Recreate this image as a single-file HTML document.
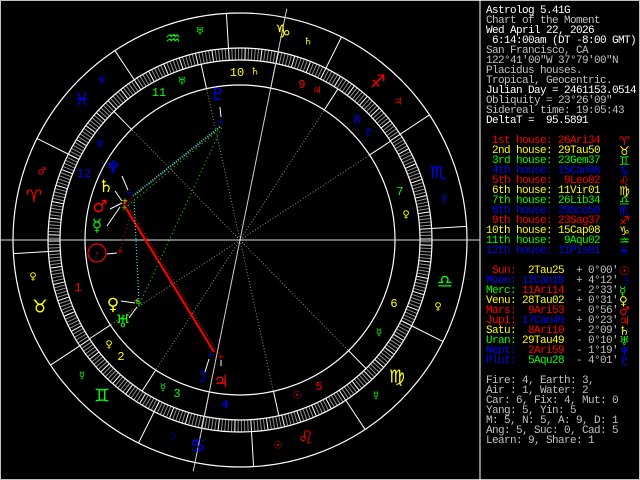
<!DOCTYPE html>
<html><head><meta charset="utf-8">
<style>
html,body{margin:0;padding:0;background:#000;}
#wrap{position:relative;width:640px;height:480px;overflow:hidden;background:#000;}
#frame{position:absolute;left:0;top:0;width:638px;height:478px;border:1px solid #c0c0c0;}
svg{position:absolute;left:0;top:0;}
.t{position:absolute;left:486px;font-family:"Liberation Mono","DejaVu Sans Mono",monospace;font-size:11px;letter-spacing:-0.6px;line-height:10px;white-space:pre;color:#c0c0c0;}
.g{position:absolute;left:619px;font-family:"DejaVu Sans",sans-serif;font-size:12px;line-height:10px;}
.w{color:#fff}.r{color:#f00}.y{color:#ff0}.gr{color:#0f0}.b{color:#00f}.s{color:#c0c0c0}
</style></head><body>
<div id="wrap">
<div id="frame"></div>
<svg id="c" width="640" height="480" viewBox="0 0 640 480" font-family="DejaVu Sans, sans-serif">
<line x1="480" y1="0" x2="480" y2="480" stroke="#fff" stroke-width="1"/>
<g id="gen"></g>
<g fill="none">
<line x1="133" y1="196" x2="221" y2="126" stroke="#0ff" stroke-width="2" stroke-dasharray="1 1.5"/>
<line x1="124" y1="204" x2="221" y2="127" stroke="#f00" stroke-width="1" stroke-dasharray="1 2"/>
<line x1="125" y1="208" x2="220" y2="129" stroke="#0f0" stroke-width="1" stroke-dasharray="1 3"/>
<line x1="124" y1="205" x2="214" y2="352" stroke="#f00" stroke-width="2"/>
<line x1="127" y1="205" x2="220" y2="356" stroke="#f00" stroke-width="1" stroke-dasharray="1 2"/>
<line x1="120" y1="252" x2="131" y2="210" stroke="#f00" stroke-width="1" stroke-dasharray="1 3"/>
<line x1="139" y1="302" x2="134" y2="200" stroke="#0ff" stroke-width="1.2" stroke-dasharray="1 2"/>
<line x1="140" y1="303" x2="222" y2="127" stroke="#0f0" stroke-width="1" stroke-dasharray="1 3"/>
</g>
<g stroke="#fff" stroke-width="1">
<line x1="220" y1="107" x2="221" y2="117"/>
<line x1="122" y1="176" x2="128" y2="190"/>
<line x1="115" y1="191" x2="122" y2="201"/>
<line x1="110" y1="209" x2="122" y2="203"/>
<line x1="107" y1="226" x2="120" y2="207"/>
<line x1="107" y1="254" x2="117" y2="253"/>
<line x1="121" y1="301" x2="135" y2="303"/>
<line x1="129" y1="318" x2="137" y2="307"/>
<line x1="205" y1="372" x2="209" y2="359"/>
<line x1="221" y1="366" x2="221" y2="360"/>
</g>
<g font-size="8" text-anchor="middle" dominant-baseline="central">
<text x="221" y="122" fill="#00f">+</text>
<text x="129" y="193" fill="#00f">+</text>
<text x="125" y="201" fill="#ff0">+</text>
<text x="124" y="204" fill="#f00">+</text>
<text x="124" y="208" fill="#0f0">+</text>
<text x="120" y="251" fill="#f00">+</text>
<text x="137" y="301" fill="#ff0">+</text>
<text x="139" y="304" fill="#0f0">+</text>
<text x="210" y="355" fill="#00f">+</text>
<text x="221" y="357" fill="#f00">+</text>
</g>
<g font-family="Liberation Mono, monospace" font-size="12" text-anchor="middle" dominant-baseline="central">
<text x="78" y="288" fill="#f00">1</text>
<text x="121" y="357" fill="#ff0">2</text>
<text x="177" y="394" fill="#0f0">3</text>
<text x="225" y="405" fill="#00f">4</text>
<text x="319" y="387" fill="#f00">5</text>
<text x="394" y="304" fill="#ff0">6</text>
<text x="400" y="192" fill="#0f0">7</text>
<text x="357" y="120" fill="#00f">8</text>
<text x="302" y="85" fill="#f00">9</text>
<text x="237" y="73" fill="#ff0">10</text>
<text x="159" y="93" fill="#0f0">11</text>
<text x="84" y="174" fill="#00f">12</text>
</g>
<g font-size="18" text-anchor="middle" dominant-baseline="central">
<text x="34" y="197" fill="#f00">♈</text>
<text x="40" y="307" fill="#ff0">♉</text>
<text x="102" y="396" fill="#0f0">♊</text>
<text x="198" y="446" fill="#00f">♋</text>
<text x="306" y="438" fill="#f00">♌</text>
<text x="397" y="377" fill="#ff0">♍</text>
<text x="445" y="282" fill="#0f0">♎</text>
<text x="438" y="173" fill="#00f">♏</text>
<text x="378" y="82" fill="#f00">♐</text>
<text x="283" y="32" fill="#ff0">♑</text>
<text x="173" y="39" fill="#0f0">♒</text>
<text x="82" y="100" fill="#00f">♓</text>
</g>
<g font-size="10" text-anchor="middle" dominant-baseline="central">
<text x="200" y="32" fill="#0f0">♅</text>
<text x="102" y="81" fill="#00f">♆</text>
<text x="42" y="172" fill="#f00">♂</text>
<text x="33" y="277" fill="#ff0">♀</text>
<text x="82" y="376" fill="#0f0">☿</text>
<text x="171" y="437" fill="#00f">☽</text>
<text x="278" y="446" fill="#f00">☉</text>
<text x="376" y="396" fill="#0f0">☿</text>
<text x="438" y="307" fill="#ff0">♀</text>
<text x="445" y="200" fill="#00f">♇</text>
<text x="398" y="102" fill="#f00">♃</text>
<text x="308" y="42" fill="#ff0">♄</text>
<text x="255" y="72" fill="#ff0">♄</text>
<text x="182" y="82" fill="#0f0">♅</text>
<text x="100" y="145" fill="#00f">♆</text>
<text x="109" y="345" fill="#ff0">♀</text>
<text x="163" y="388" fill="#0f0">☿</text>
<text x="224" y="406" fill="#00f">☽</text>
<text x="297" y="396" fill="#f00">☉</text>
<text x="379" y="333" fill="#0f0">☿</text>
<text x="406" y="215" fill="#ff0">♀</text>
<text x="369" y="133" fill="#00f">♇</text>
<text x="317" y="91" fill="#f00">♃</text>
</g>
<circle cx="97" cy="253" r="9" fill="none" stroke="#f00" stroke-width="1.2"/>
<circle cx="97" cy="253" r="0.8" fill="#f00"/>
<g font-size="17" text-anchor="middle" dominant-baseline="central">
<text x="218" y="95" fill="#00f">♇</text>
<text x="113" y="168" fill="#00f">♆</text>
<text x="106" y="187" fill="#ff0">♄</text>
<text x="100" y="207" fill="#f00">♂</text>
<text x="97" y="226" fill="#0f0">☿</text>
<text x="113" y="305" fill="#ff0">♀</text>
<text x="123" y="322" fill="#0f0">♅</text>
<text x="200" y="377" fill="#00f">☽</text>
<text x="221" y="382" fill="#f00">♃</text>
</g>
</svg>

<div class="t w" style="top:6px">Astrolog 5.41G</div>
<div class="t s" style="top:16px">Chart of the Moment</div>
<div class="t w" style="top:26px">Wed April 22, 2026</div>
<div class="t w" style="top:36px"> 6:14:00am (DT -8:00 GMT)</div>
<div class="t s" style="top:46px">San Francisco, CA</div>
<div class="t s" style="top:56px">122°41'00"W 37°79'00"N</div>
<div class="t s" style="top:66px">Placidus houses.</div>
<div class="t s" style="top:76px">Tropical, Geocentric.</div>
<div class="t w" style="top:86px">Julian Day = 2461153.0514</div>
<div class="t s" style="top:96px">Obliquity = 23°26'09"</div>
<div class="t s" style="top:106px">Sidereal time: 19:05:43</div>
<div class="t w" style="top:116px">DeltaT =  95.5891</div>

<div class="t r" style="top:136px"> 1st house: 26Ari34</div><div class="g r" style="top:136px">♈</div>
<div class="t y" style="top:146px"> 2nd house: 29Tau50</div><div class="g y" style="top:146px">♉</div>
<div class="t gr" style="top:156px"> 3rd house: 23Gem37</div><div class="g gr" style="top:156px">♊</div>
<div class="t b" style="top:166px"> 4th house: 15Can08</div><div class="g b" style="top:166px">♋</div>
<div class="t r" style="top:176px"> 5th house:  9Leo02</div><div class="g r" style="top:176px">♌</div>
<div class="t y" style="top:186px"> 6th house: 11Vir01</div><div class="g y" style="top:186px">♍</div>
<div class="t gr" style="top:196px"> 7th house: 26Lib34</div><div class="g gr" style="top:196px">♎</div>
<div class="t b" style="top:206px"> 8th house: 29Sco50</div><div class="g b" style="top:206px">♏</div>
<div class="t r" style="top:216px"> 9th house: 23Sag37</div><div class="g r" style="top:216px">♐</div>
<div class="t y" style="top:226px">10th house: 15Cap08</div><div class="g y" style="top:226px">♑</div>
<div class="t gr" style="top:236px">11th house:  9Aqu02</div><div class="g gr" style="top:236px">♒</div>
<div class="t b" style="top:246px">12th house: 11Pis01</div><div class="g b" style="top:246px">♓</div>

<div class="t" style="top:266px"><span class="r"> Sun:</span>  <span class="y">2Tau25</span>  + 0°00'</div><div class="g r" style="top:266px">☉</div>
<div class="t" style="top:276px"><span class="b">Moon:</span> <span class="b">12Can10</span>  + 4°12'</div><div class="g b" style="top:276px">☽</div>
<div class="t" style="top:286px"><span class="gr">Merc:</span> <span class="r">11Ari14</span>  - 2°33'</div><div class="g gr" style="top:286px">☿</div>
<div class="t" style="top:296px"><span class="y">Venu:</span> <span class="y">28Tau02</span>  + 0°31'</div><div class="g y" style="top:296px">♀</div>
<div class="t" style="top:306px"><span class="r">Mars:</span>  <span class="r">9Ari53</span>  - 0°56'</div><div class="g r" style="top:306px">♂</div>
<div class="t" style="top:316px"><span class="r">Jupi:</span> <span class="b">17Can49</span>  + 0°23'</div><div class="g r" style="top:316px">♃</div>
<div class="t" style="top:326px"><span class="y">Satu:</span>  <span class="r">8Ari10</span>  - 2°09'</div><div class="g y" style="top:326px">♄</div>
<div class="t" style="top:336px"><span class="gr">Uran:</span> <span class="y">29Tau49</span>  - 0°10'</div><div class="g gr" style="top:336px">♅</div>
<div class="t" style="top:346px"><span class="b">Nept:</span>  <span class="r">2Ari59</span>  - 1°19'</div><div class="g b" style="top:346px">♆</div>
<div class="t" style="top:356px"><span class="b">Plut:</span>  <span class="gr">5Aqu28</span>  - 4°01'</div><div class="g b" style="top:356px">♇</div>

<div class="t s" style="top:376px">Fire: 4, Earth: 3,</div>
<div class="t s" style="top:386px">Air : 1, Water: 2</div>
<div class="t s" style="top:396px">Car: 6, Fix: 4, Mut: 0</div>
<div class="t s" style="top:406px">Yang: 5, Yin: 5</div>
<div class="t s" style="top:416px">M: 5, N: 5, A: 9, D: 1</div>
<div class="t s" style="top:426px">Ang: 5, Suc: 0, Cad: 5</div>
<div class="t s" style="top:436px">Learn: 9, Share: 1</div>
</div>
<script>
(function(){
var ns="http://www.w3.org/2000/svg",g=document.getElementById("gen");
var cx=240,cy=240,asc=26.567;
function el(n,a){var e=document.createElementNS(ns,n);for(var k in a)e.setAttribute(k,a[k]);g.appendChild(e);return e;}
function pt(L,r){var t=(180+L-asc)*Math.PI/180;return [cx+r*Math.cos(t),cy-r*Math.sin(t)];}
function ln(L,r1,r2,c,w,d){var a=pt(L,r1),b=pt(L,r2);var o={x1:a[0],y1:a[1],x2:b[0],y2:b[1],stroke:c,"stroke-width":w||1};if(d)o["stroke-dasharray"]=d;el("line",o);}
for(var i=0;i<360;i++){ln(i,180,192,(i%5==0)?"#fff":"#909090",1);}
[227,192,180,155].forEach(function(r){el("circle",{cx:cx,cy:cy,r:r,fill:"none",stroke:"#fff","stroke-width":1.2});});
for(var k=0;k<12;k++)ln(30*k,192,227,"#fff",1);
var h=[26.567,59.833,83.617,105.133,129.033,161.017];
var hs=h.concat(h.map(function(x){return x+180;}));
hs.forEach(function(L,i){ln(L,155,180,"#fff",1);if(i%3!=0)ln(L,0,155,"#909090",1,"1 2");});
el("line",{x1:0,y1:240,x2:480,y2:240,stroke:"#e0e0e0","stroke-width":1});
ln(285.133,-236,236,"#d0d0d0",1);
})();
</script>
</body></html>
